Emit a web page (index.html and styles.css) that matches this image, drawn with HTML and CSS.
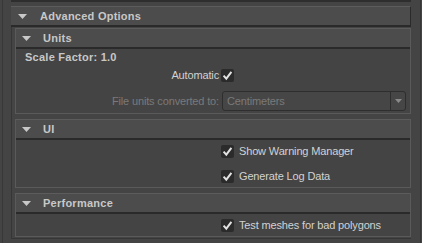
FILE: index.html
```html
<!DOCTYPE html>
<html>
<head>
<meta charset="utf-8">
<link rel="stylesheet" href="styles.css">
</head>
<body>
<div class="viewport">
  <div class="prev"></div>
  <section class="adv">
    <div class="hdr adv-hdr"><svg class="tri" viewBox="0 0 9 5"><polygon points="0,0 9,0 4.5,5" fill="#c8c8c8"/></svg><span>Advanced Options</span></div>
    <div class="adv-body">
      <section class="sub">
        <div class="hdr"><svg class="tri" viewBox="0 0 9 5"><polygon points="0,0 9,0 4.5,5" fill="#c8c8c8"/></svg><span>Units</span></div>
        <div class="units-body">
          <div class="scale">Scale Factor: 1.0</div>
          <div class="form">
            <span class="lbl">Automatic</span>
            <span class="cb"><svg viewBox="0 0 13 13"><path d="M2.6 6.6 L5.3 9.6 L10.4 2.8" fill="none" stroke="#e2e2e2" stroke-width="2"/></svg></span>
            <span class="lbl dis">File units converted to:</span>
            <div class="select"><span class="txt">Centimeters</span><span class="sel-btn"><svg viewBox="0 0 7 4"><polygon points="0,0 7,0 3.5,4" fill="#8a8a8a"/></svg></span></div>
          </div>
        </div>
      </section>
      <section class="sub">
        <div class="hdr"><svg class="tri" viewBox="0 0 9 5"><polygon points="0,0 9,0 4.5,5" fill="#c8c8c8"/></svg><span>UI</span></div>
        <div class="chk-body">
          <div class="chk-row"><span class="cb"><svg viewBox="0 0 13 13"><path d="M2.6 6.6 L5.3 9.6 L10.4 2.8" fill="none" stroke="#e2e2e2" stroke-width="2"/></svg></span><span>Show Warning Manager</span></div>
          <div class="chk-row"><span class="cb"><svg viewBox="0 0 13 13"><path d="M2.6 6.6 L5.3 9.6 L10.4 2.8" fill="none" stroke="#e2e2e2" stroke-width="2"/></svg></span><span>Generate Log Data</span></div>
        </div>
      </section>
      <section class="sub">
        <div class="hdr"><svg class="tri" viewBox="0 0 9 5"><polygon points="0,0 9,0 4.5,5" fill="#c8c8c8"/></svg><span>Performance</span></div>
        <div class="chk-body">
          <div class="chk-row"><span class="cb"><svg viewBox="0 0 13 13"><path d="M2.6 6.6 L5.3 9.6 L10.4 2.8" fill="none" stroke="#e2e2e2" stroke-width="2"/></svg></span><span>Test meshes for bad polygons</span></div>
        </div>
      </section>
    </div>
  </section>
</div>
</body>
</html>
```

FILE: styles.css
```css
* { box-sizing: border-box; }
html, body {
  margin: 0;
  width: 422px;
  height: 243px;
  overflow: hidden;
  background: #444444;
  font-family: "Liberation Sans", Arial, sans-serif;
  font-size: 11px;
  letter-spacing: -0.15px;
  color: #d2d2d2;
}
.viewport {
  margin-left: 2px;
  width: 419px;
  height: 243px;
  border-left: 1px solid #383838;
  border-right: 1px solid #363636;
  padding-left: 8px;
}
.prev {
  width: 400px;
  height: 2px;
  background: #2e2e2e;
  margin-bottom: 4px;
}
.adv { width: 400px; }
.hdr {
  display: flex;
  align-items: center;
  height: 21px;
  border-top: 1px solid #5c5c5c;
  border-bottom: 2px solid #2a2a2a;
  background: #4c4c4c;
  padding-left: 7px;
  color: #c8c8c8;
  font-weight: bold;
  letter-spacing: 0.25px;
}
.adv-hdr { border-right: 1px solid #2a2a2a; }
.tri { width: 9px; height: 5px; margin-right: 13px; flex: none; }
.sub .hdr { padding-left: 6px; }
.sub .tri { margin-right: 12px; }
.adv-body {
  border-left: 1px solid #363636;
  border-bottom: 1px solid #363636;
  padding: 1px 0 1px 3px;
}
.sub {
  border: 1px solid #5a5a5a;
  border-top: none;
}
.sub + .sub { margin-top: 5px; }
.units-body {
  height: 64px;
  padding: 0 4px 2px 0;
}
.scale {
  height: 16px;
  line-height: 16px;
  padding-left: 9px;
  font-weight: bold;
  letter-spacing: 0.25px;
  color: #c8c8c8;
}
.form {
  display: grid;
  grid-template-columns: 203px 1fr;
  column-gap: 2px;
  row-gap: 6px;
  grid-auto-rows: 20px;
  align-items: center;
}
.lbl { text-align: right; color: #d2d2d2; }
.lbl.dis { color: #7a7a7a; }
.cb {
  display: flex;
  width: 13px;
  height: 13px;
  flex: none;
  background: #2b2b2b;
  border-radius: 2px;
}
.cb svg { width: 13px; height: 13px; }
.select {
  margin-left: 1px;
  width: 184px;
  height: 20px;
  display: flex;
  align-items: stretch;
  border: 1px solid #2e2e2e;
  border-radius: 3px;
  background: #464646;
  color: #7a7a7a;
}
.select .txt {
  flex: 1;
  display: flex;
  align-items: center;
  padding-left: 4px;
}
.sel-btn {
  width: 15px;
  border-left: 1px solid #2e2e2e;
  display: flex;
  align-items: center;
  justify-content: center;
}
.sel-btn svg { width: 7px; height: 4px; }
.chk-body {
  display: flex;
  flex-direction: column;
  gap: 5px;
  padding: 1px 0 1px 205px;
}
.chk-row {
  height: 20px;
  display: flex;
  align-items: center;
  gap: 5px;
  color: #d2d2d2;
}
```
